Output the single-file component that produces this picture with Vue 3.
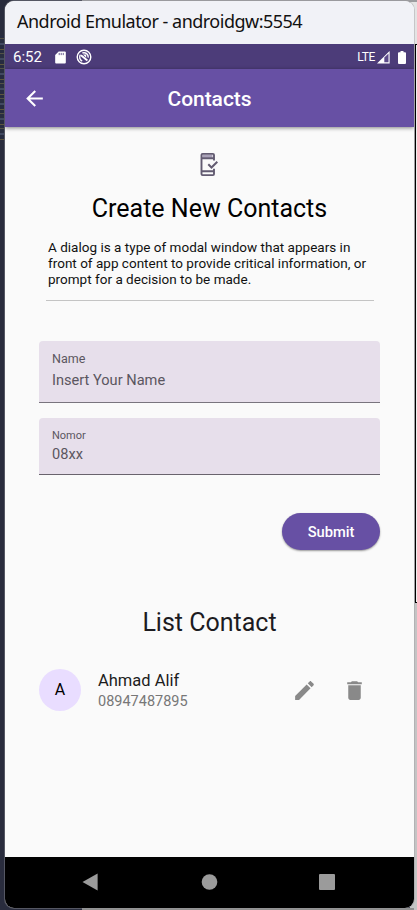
<script setup>
import { ref } from 'vue'

const name = ref('')
const number = ref('')
const contacts = ref([{ name: 'Ahmad Alif', number: '08947487895' }])
</script>

<template>
  <div class="desktop">
    <div class="code-edge"></div>
    <div class="back-window"></div>
    <div class="emulator">
      <div class="titlebar"><span>Android Emulator - androidgw:5554</span></div>
      <div class="statusbar">
        <span class="clock">6:52</span>
        <svg class="sd" viewBox="0 0 12 14"><path d="M4 .5h6.8q1 0 1 1v11q0 1-1 1H1.2q-1 0-1-1V4.3z" fill="#fff"/><path d="M4.6 2v2.4M6.8 2v2.4M9 2v2.4" stroke="#4b3b79" stroke-width=".9"/></svg>
        <svg class="sync" viewBox="0 0 16 16" fill="none" stroke="#fff"><circle cx="8" cy="8" r="6.8" stroke-width="1.4"/><path d="M6.2 12A4.3 4.3 0 0 1 4.4 5.6M6.4 4A4.3 4.3 0 0 1 12.2 8.6" stroke-width="1.4"/><path d="M5 6.2l6.4 5.4" stroke-width="1.9"/><path d="M7 5.6h3.2v3.2z" fill="#fff" stroke="none"/></svg>
        <span class="lte">LTE</span>
        <svg class="signal" viewBox="0 0 13 13"><path d="M0 12.5L12.6 0v12.5z" fill="#fff"/><path d="M7.3 6.6L11.5 2.5v8.8H7.3z" fill="#5c4a8a"/></svg>
        <svg class="battery" viewBox="0 0 8 13"><path d="M2.5 0h3v1.2H7q1 0 1 1V12q0 1-1 1H1q-1 0-1-1V2.2q0-1 1-1h1.5z" fill="#fff"/></svg>
      </div>
      <header class="appbar">
        <svg class="back" viewBox="0 0 24 24"><path d="M20 11H7.83l5.59-5.59L12 4l-8 8 8 8 1.41-1.41L7.83 13H20v-2z" fill="#fff"/></svg>
        <h1><span>Contacts</span></h1>
      </header>
      <main>
        <svg class="phone" viewBox="0 0 25 25"><path d="M6.5 2.7h10v3h-10z" fill="#a9a1b8"/><path d="M18 8.5V3q0-1.1-1.1-1.1H6.6Q5.5 1.9 5.5 3v19q0 1.1 1.1 1.1h10.3q1.1 0 1.1-1.1v-5.2M5.5 6.2H18M5.5 19.2H18" fill="none" stroke="#625b71" stroke-width="1.9"/><path d="M12.3 12.3l3.2 3.2 5.8-5.8" fill="none" stroke="#625b71" stroke-width="2"/></svg>
        <h2 class="create"><span>Create New Contacts</span></h2>
        <p class="intro">
          <span>A dialog is a type of modal window that appears in</span><br />
          <span>front of app content to provide critical information, or</span><br />
          <span>prompt for a decision to be made.</span>
        </p>
        <div class="divider"></div>
        <label class="field name">
          <span class="caption">Name</span>
          <input v-model="name" placeholder="Insert Your Name" />
        </label>
        <label class="field nomor">
          <span class="caption">Nomor</span>
          <input v-model="number" placeholder="08xx" />
        </label>
        <button class="submit"><span>Submit</span></button>
        <h2 class="list-title"><span>List Contact</span></h2>
        <div v-for="c in contacts" :key="c.number" class="contact">
          <div class="avatar">{{ c.name[0] }}</div>
          <div class="who">
            <span class="who-name">{{ c.name }}</span>
            <span class="who-number">{{ c.number }}</span>
          </div>
          <svg class="edit" viewBox="0 0 24 24"><path d="M3 17.25V21h3.75L17.81 9.94l-3.75-3.75L3 17.25zM20.71 7.04c.39-.39.39-1.02 0-1.41l-2.34-2.34c-.39-.39-1.02-.39-1.41 0l-1.83 1.83 3.75 3.75 1.83-1.83z" fill="#898989"/></svg>
          <svg class="delete" viewBox="0 0 24 24"><path d="M6 19c0 1.1.9 2 2 2h8c1.1 0 2-.9 2-2V7H6v12zM19 4h-3.5l-1-1h-5l-1 1H5v2h14V4z" fill="#898989"/></svg>
        </div>
      </main>
      <nav class="navbar">
        <svg viewBox="0 0 17 18"><path d="M.5 9L15.6.6v16.8z" fill="#9b9b9b"/></svg>
        <svg viewBox="0 0 17 18"><circle cx="8.5" cy="9" r="7.8" fill="#9b9b9b"/></svg>
        <svg viewBox="0 0 17 18"><rect x="0" y="1" width="16" height="16" rx="1" fill="#9b9b9b"/></svg>
      </nav>
    </div>
  </div>
</template>

<style>
body { margin: 0; }
</style>

<style scoped>
* { box-sizing: border-box; }
.desktop {
  position: relative;
  width: 417px;
  height: 910px;
  padding: 1px 3px 2px 5px;
  overflow: hidden;
  font-family: Roboto, "Liberation Sans", sans-serif;
  background:
    linear-gradient(#9c9c9f, #9c9c9f) 82px 0 / 335px 2px no-repeat,
    linear-gradient(#8f8f8f, #8f8f8f) 82px 908px / 332px 2px no-repeat,
    linear-gradient(#e4e4e4 0 44px, #a5a5a7 44px 602px, #c4c4c4 602px) 410px 0 / 7px 910px no-repeat,
    #292c3d;
}
.code-edge {
  position: absolute;
  left: 0;
  top: 35px;
  width: 4px;
  height: 105px;
  opacity: .55;
  background: repeating-linear-gradient(#252b43 0 3px, #77724f 3px 4px, #293044 4px 8px, #56627f 8px 10px, #252b43 10px 14px, #8b793f 14px 15px);
}
.back-window {
  position: absolute;
  left: 415px;
  top: 44px;
  width: 4px;
  height: 559px;
  border: 1px solid #000;
  background: #eee;
}
.emulator {
  position: relative;
  display: flex;
  flex-direction: column;
  width: 409px;
  height: 907px;
  border-radius: 9px;
  overflow: hidden;
  background: #fafafa;
  box-shadow: 0 0 0 1px #99999e66;
}
.titlebar {
  height: 43px;
  padding-left: 12px;
  background: #f1f2f7;
  color: #111;
  font: 18px/41px "Noto Sans", "Open Sans", sans-serif;
  letter-spacing: -.51px;
  white-space: nowrap;
}
.statusbar {
  display: flex;
  align-items: center;
  height: 25px;
  padding: 1px 8px 0 8px;
  background: #4c3c79;
  color: #fff;
}
.clock { width: 42px; font-size: 15px; }
.sd { width: 11px; height: 13px; }
.sync { width: 16px; height: 16px; margin-left: 10px; }
.lte { margin-left: auto; font-size: 12px; letter-spacing: -.4px; }
.signal { width: 13px; height: 13px; margin-left: 2px; }
.battery { width: 8px; height: 13px; margin-left: 8px; }
.appbar {
  position: relative;
  z-index: 1;
  display: flex;
  align-items: center;
  height: 58px;
  padding: 0 42px 0 17px;
  background: #6750a4;
  color: #fff;
  box-shadow: 0 1px 4px #0000007a;
}
.back { width: 25px; height: 25px; }
h1 { flex: 1; margin: 2px 0 0; text-align: center; font-size: 21px; font-weight: 500; line-height: 30px; letter-spacing: -.05px; }
main {
  display: flex;
  flex-direction: column;
  height: 730px;
  padding: 25px 34px 0;
  background: #fafafa;
}
.phone { width: 25px; height: 25px; margin-left: 157px; flex: none; }
h2 { font-weight: 400; text-align: center; margin: 0; font-size: 25px; line-height: 32px; }
.create { margin-top: 16px; color: #000; }
.intro { margin: 14px 0 0 9px; font-size: 13.5px; line-height: 16px; letter-spacing: .015px; color: #111; white-space: nowrap; }
.divider { flex: none; height: 1px; margin: 13px 6px 0 7px; background: #c4c4c4; }
.field {
  display: flex;
  flex: none;
  flex-direction: column;
  padding: 0 13px;
  border-radius: 4px 4px 0 0;
  background: #e7dfeb;
  border-bottom: 1px solid #69636d;
  color: #5b5660;
}
.field.name { height: 62px; margin-top: 40px; padding-top: 10px; border-bottom-color: #79747e; }
.field.nomor { height: 57px; margin-top: 15px; padding-top: 11px; }
.caption { font-size: 12.5px; line-height: 16px; }
.nomor .caption { font-size: 11px; line-height: 14px; }
input { border: 0; padding: 0; outline: 0; background: none; height: 20px; margin-top: 3px; font: 14.6px/20px Roboto, sans-serif; color: #5b5660; }
.nomor input { margin-top: 1px; }
input::placeholder { color: #5b5660; opacity: 1; }
.submit {
  flex: none;
  align-self: flex-end;
  width: 98px;
  height: 37px;
  margin-top: 38px;
  padding: 1px 0 0;
  border: 0;
  border-radius: 19px;
  background: #6750a4;
  color: #fff;
  font: 500 14.7px/36px Roboto, sans-serif;
  box-shadow: 0 1px 2px #00000065;
}
.list-title { margin-top: 57px; color: #1c1b1f; }
.contact { display: flex; align-items: center; height: 42px; margin-top: 30px; }
.avatar { width: 42px; height: 42px; border-radius: 50%; background: #e9ddff; text-align: center; font-size: 16px; line-height: 42px; color: #000; }
.who { display: flex; flex-direction: column; flex: 1; margin-left: 17px; padding-top: 2px; }
.who-name { font-size: 16.5px; line-height: 22px; color: #1d1d1d; }
.who-number { font-size: 14.5px; line-height: 20px; color: #777; }
.edit, .delete { width: 25px; height: 25px; }
.delete { margin: 0 13px 0 25px; }
.navbar {
  display: flex;
  align-items: center;
  height: 51px;
  padding: 0 78px 2px 77px;
  justify-content: space-between;
  background: #000;
}
.navbar svg { width: 17px; height: 18px; }
</style>
